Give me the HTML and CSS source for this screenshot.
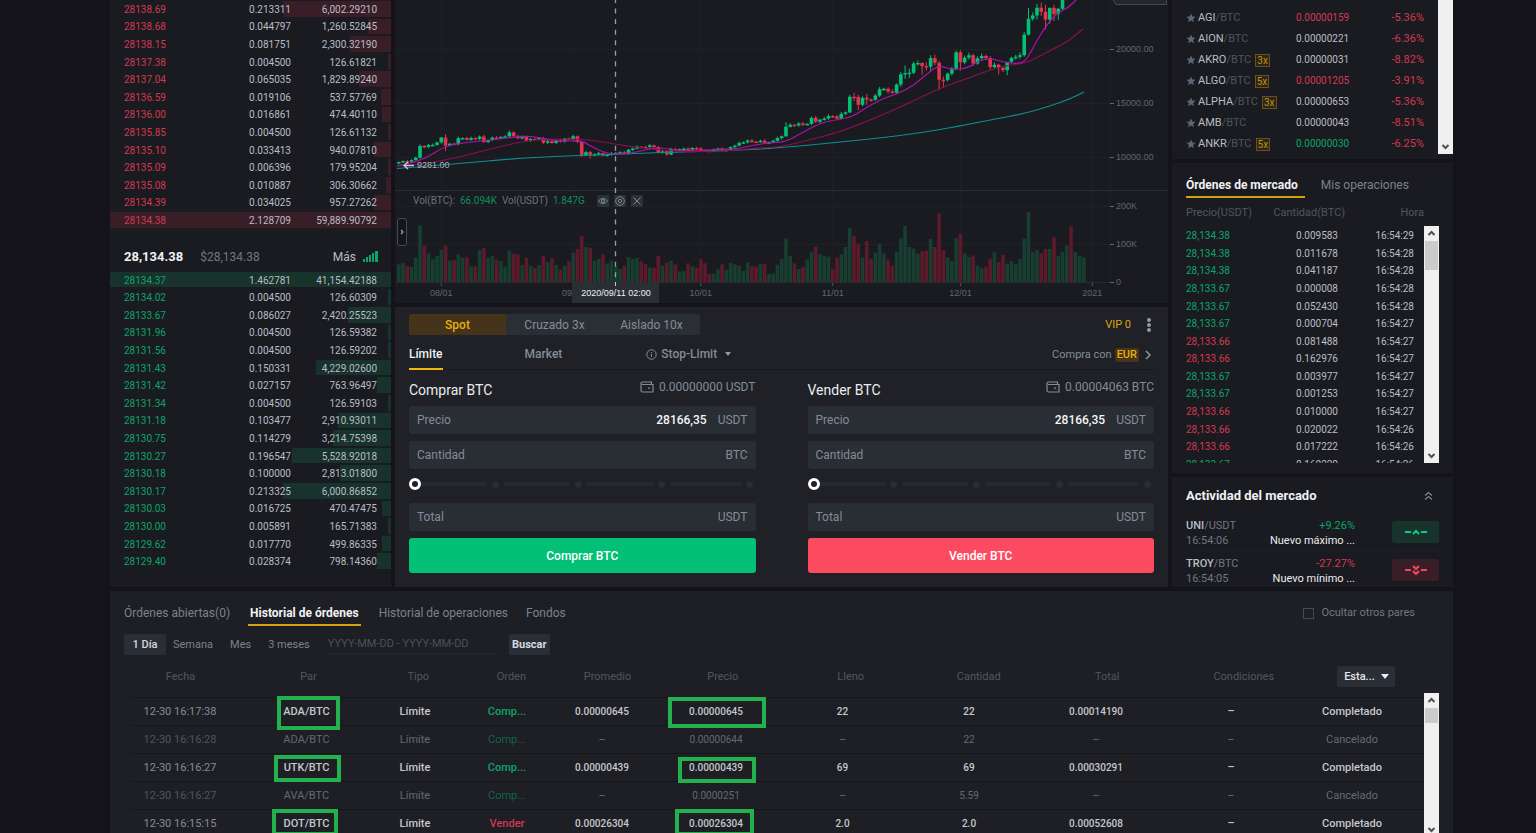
FILE: index.html
```html
<!DOCTYPE html>
<html lang="es">
<head>
<meta charset="utf-8">
<title>BTC/USDT</title>
<link rel="stylesheet" href="styles.css">
</head>
<body>
<svg class="defs" aria-hidden="true">
  <symbol id="star" viewBox="0 0 24 24"><path d="M12 1l3.200 7.400 7.800.7-6 5.200 1.900 7.900L12 18l-6.900 4.200L7 14.300 1 9.100l7.800-.7z"/></symbol>
  <symbol id="up" viewBox="0 0 15 15"><path d="M4.500 9l3-3 3 3" fill="none" stroke="#505050" stroke-width="2"/></symbol>
  <symbol id="down" viewBox="0 0 15 15"><path d="M4.500 6l3 3 3-3" fill="none" stroke="#505050" stroke-width="2"/></symbol>
  <symbol id="wallet" viewBox="0 0 14 12"><path d="M11.500 3V1H2.500A1.500 1.500 0 0 0 1 2.500v7A1.500 1.500 0 0 0 2.500 11H13V3.500H2M10 7.200H8" fill="none" stroke="currentColor" stroke-width="1.200"/></symbol>
</svg>
<div class="page">
  <main class="top">
    <section class="panel book">
      <table class="asks"><tbody id="asks"></tbody></table>
      <div class="last">
        <strong>28,134.38</strong><span class="usd">$28,134.38</span>
        <a href="#" class="more">Más
          <svg width="15" height="12" viewBox="0 0 15 12" fill="#0aa56a"><path d="M0 8h2v3H0zM3 6h2v5H3zM6 4h2v7H6zM9 2h2v9H9zM12 0h3v11h-3z"/></svg></a>
      </div>
      <table class="bids"><tbody id="bids"></tbody></table>
    </section>

    <div class="center">
      <section class="panel chart">
        <svg id="chart" viewBox="395 0 773 303" preserveAspectRatio="xMinYMin meet"></svg>
        <div class="legend">
          <span>Vol(BTC):</span><b>66.094K</b><span>Vol(USDT)</span><b>1.847G</b>
          <button aria-label="Ver"><svg viewBox="0 0 12 12"><path d="M1.500 6Q6 .8 10.500 6 6 11.200 1.500 6z"/><circle cx="6" cy="6" r="1.500"/></svg></button>
          <button aria-label="Ajustes"><svg viewBox="0 0 12 12"><circle cx="6" cy="6" r="4.300"/><circle cx="6" cy="6" r="1.700"/></svg></button>
          <button aria-label="Cerrar"><svg viewBox="0 0 12 12"><path d="M2.500 2.500l7 7m0-7l-7 7"/></svg></button>
        </div>
        <button class="drawer" aria-label="Herramientas"><svg width="6" height="8" viewBox="0 0 6 8"><path d="M2 2l2 2-2 2" fill="none" stroke="#9aa3af" stroke-width="1.200"/></svg></button>
      </section>

      <section class="panel trade">
        <div class="row modes">
          <div class="seg"><button class="on">Spot</button><button>Cruzado 3x</button><button>Aislado 10x</button></div>
          <div class="vip"><span>VIP 0</span>
            <svg width="4" height="14" viewBox="0 0 4 14" fill="#929aa5"><circle cx="2" cy="2" r="2"/><circle cx="2" cy="7" r="2"/><circle cx="2" cy="12" r="2"/></svg></div>
        </div>
        <div class="row types">
          <button class="on">Límite</button>
          <button class="market">Market</button>
          <button class="stop"><svg width="11" height="11" viewBox="0 0 11 11" fill="none" stroke="currentColor"><circle cx="5.500" cy="5.500" r="4.700"/><path d="M5.500 5v3M5.500 3v1.200"/></svg>Stop-Limit<i class="caret"></i></button>
          <a href="#" class="buywith">Compra con <em>EUR</em><svg width="6" height="10" viewBox="0 0 6 10"><path d="M1 1l4 4-4 4" fill="none" stroke="#929aa5" stroke-width="1.400"/></svg></a>
        </div>
        <div class="forms">
          <form class="order">
            <div class="ohead"><h2>Comprar BTC</h2><span><svg width="14" height="12"><use href="#wallet"/></svg>0.00000000 USDT</span></div>
            <label class="field"><span>Precio</span><input value="28166,35"><span>USDT</span></label>
            <label class="field"><span>Cantidad</span><input><span>BTC</span></label>
            <div class="slider"><div class="ticks"><i></i><i></i><i></i><i></i></div><input type="range" value="0" aria-label="Porcentaje de compra"></div>
            <label class="field"><span>Total</span><input><span>USDT</span></label>
            <button type="button" class="submit buy">Comprar BTC</button>
          </form>
          <form class="order">
            <div class="ohead"><h2>Vender BTC</h2><span><svg width="14" height="12"><use href="#wallet"/></svg>0.00004063 BTC</span></div>
            <label class="field"><span>Precio</span><input value="28166,35"><span>USDT</span></label>
            <label class="field"><span>Cantidad</span><input><span>BTC</span></label>
            <div class="slider"><div class="ticks"><i></i><i></i><i></i><i></i></div><input type="range" value="0" aria-label="Porcentaje de venta"></div>
            <label class="field"><span>Total</span><input><span>USDT</span></label>
            <button type="button" class="submit sell">Vender BTC</button>
          </form>
        </div>
      </section>
    </div>

    <aside class="side">
      <section class="panel pairs">
        <table><tbody>
          <tr><td><svg><use href="#star"/></svg><b>AGI</b>/BTC</td><td class="r">0.00000159</td><td class="r">-5.36%</td></tr>
          <tr><td><svg><use href="#star"/></svg><b>AION</b>/BTC</td><td>0.00000221</td><td class="r">-6.36%</td></tr>
          <tr><td><svg><use href="#star"/></svg><b>AKRO</b>/BTC<em>3x</em></td><td>0.00000031</td><td class="r">-8.82%</td></tr>
          <tr><td><svg><use href="#star"/></svg><b>ALGO</b>/BTC<em>5x</em></td><td class="r">0.00001205</td><td class="r">-3.91%</td></tr>
          <tr><td><svg><use href="#star"/></svg><b>ALPHA</b>/BTC<em>3x</em></td><td>0.00000653</td><td class="r">-5.36%</td></tr>
          <tr><td><svg><use href="#star"/></svg><b>AMB</b>/BTC</td><td>0.00000043</td><td class="r">-8.51%</td></tr>
          <tr><td><svg><use href="#star"/></svg><b>ANKR</b>/BTC<em>5x</em></td><td class="g">0.00000030</td><td class="r">-6.25%</td></tr>
        </tbody></table>
        <div class="scroll end"><svg><use href="#down"/></svg></div>
      </section>

      <section class="panel market-trades">
        <div class="tabs"><button class="on">Órdenes de mercado</button><button>Mis operaciones</button></div>
        <div class="thead"><span>Precio(USDT)</span><span>Cantidad(BTC)</span><span>Hora</span></div>
        <div class="view">
          <table><tbody id="trades"></tbody></table>
          <div class="scroll"><svg><use href="#up"/></svg><i class="thumb tall"></i><svg class="bottom"><use href="#down"/></svg></div>
        </div>
      </section>

      <section class="panel activity">
        <header><h2>Actividad del mercado</h2>
          <svg width="9" height="9" viewBox="0 0 9 9" fill="none" stroke="#7c8591" stroke-width="1.200"><path d="M1 4.500l3.500-3 3.500 3M1 8.500l3.500-3 3.500 3"/></svg></header>
        <div class="item">
          <div><span><b>UNI</b>/USDT</span><time>16:54:06</time></div>
          <div class="event"><span class="g">+9.26%</span><span>Nuevo máximo ...</span></div>
          <button class="badge gbg" aria-label="Subida"><svg width="24" height="10" viewBox="0 0 24 10" fill="none" stroke="#0ecb81" stroke-width="2"><path d="M1 5h6M17 5h6M9 7l3-3 3 3"/></svg></button>
        </div>
        <div class="item">
          <div><span><b>TROY</b>/BTC</span><time>16:54:05</time></div>
          <div class="event"><span class="r">-27.27%</span><span>Nuevo mínimo ...</span></div>
          <button class="badge rbg" aria-label="Bajada"><svg width="24" height="10" viewBox="0 0 24 10" fill="none" stroke="#f6465d" stroke-width="2"><path d="M1 5h6M17 5h6M9 1l3 3 3-3M9 6l3 3 3-3"/></svg></button>
        </div>
      </section>
    </aside>
  </main>

  <section class="panel history">
    <div class="htop">
      <div class="tabs"><button>Órdenes abiertas(0)</button><button class="on">Historial de órdenes</button><button>Historial de operaciones</button><button>Fondos</button></div>
      <label class="hide"><input type="checkbox">Ocultar otros pares</label>
    </div>
    <div class="filters">
      <button class="fill day">1 Día</button><button class="week">Semana</button><button class="month">Mes</button><button class="three">3 meses</button>
      <input placeholder="YYYY-MM-DD - YYYY-MM-DD" aria-label="Fechas">
      <button class="fill search">Buscar</button>
    </div>
    <div class="grid">
      <table>
        <thead><tr><th>Fecha</th><th>Par</th><th>Tipo</th><th>Orden</th><th>Promedio</th><th>Precio</th><th>Lleno</th><th>Cantidad</th><th>Total</th><th>Condiciones</th><th><select aria-label="Estado"><option>Esta...</option></select></th></tr></thead>
        <tbody>
          <tr><td>12-30 16:17:38</td><td>ADA/BTC<i class="mark pair-a"></i></td><td>Límite</td><td class="g">Comp...</td><td class="n">0.00000645</td><td class="n">0.00000645<i class="mark price-a"></i></td><td class="n">22</td><td class="n">22</td><td class="n">0.00014190</td><td>–</td><td>Completado</td></tr>
          <tr class="dim"><td>12-30 16:16:28</td><td>ADA/BTC</td><td>Límite</td><td class="g">Comp...</td><td>–</td><td class="n">0.00000644</td><td>–</td><td class="n">22</td><td>–</td><td>–</td><td>Cancelado</td></tr>
          <tr><td>12-30 16:16:27</td><td>UTK/BTC<i class="mark pair-b"></i></td><td>Límite</td><td class="g">Comp...</td><td class="n">0.00000439</td><td class="n">0.00000439<i class="mark price-b"></i></td><td class="n">69</td><td class="n">69</td><td class="n">0.00030291</td><td>–</td><td>Completado</td></tr>
          <tr class="dim"><td>12-30 16:16:27</td><td>AVA/BTC</td><td>Límite</td><td class="g">Comp...</td><td>–</td><td class="n">0.0000251</td><td>–</td><td class="n">5.59</td><td>–</td><td>–</td><td>Cancelado</td></tr>
          <tr><td>12-30 16:15:15</td><td>DOT/BTC<i class="mark pair-c"></i></td><td>Límite</td><td class="r">Vender</td><td class="n">0.00026304</td><td class="n">0.00026304<i class="mark price-c"></i></td><td class="n">2.0</td><td class="n">2.0</td><td class="n">0.00052608</td><td>–</td><td>Completado</td></tr>
        </tbody>
      </table>
      <div class="scroll"><svg><use href="#up"/></svg><i class="thumb"></i><svg class="bottom"><use href="#down"/></svg></div>
    </div>
  </section>
</div>
<script src="app.js"></script>
</body>
</html>
```
FILE: styles.css
```css
* { box-sizing: border-box; margin: 0; padding: 0; }
body {
  height: 100vh; overflow: hidden; background: #14131a; color: #b9bdc4;
  font-family: Roboto, "Liberation Sans", sans-serif; font-size: 11px; line-height: 14px;
}
button, input, select { font: inherit; color: inherit; background: none; border: 0; }
a { color: inherit; text-decoration: none; }
em, i { font-style: normal; }
table { border-collapse: collapse; }
.defs { position: absolute; width: 0; height: 0; }
.g, td.g { color: #0aa56a; }
.r, td.r { color: #d23951; }
.page { padding: 0 83px 0 110px; display: flex; flex-direction: column; gap: 4px; }
.top { display: grid; grid-template-columns: 281px 1fr 281px; gap: 4px; }
.panel { background: #1a1b20; position: relative; }

/* Order book */
.book { display: flex; flex-direction: column; padding-bottom: 17px; font-size: 10px; }
.book table { display: flex; flex-direction: column; min-height: 0; }
.asks { flex: 13 1 0; }
.bids { flex: 17 1 0; }
.book tbody { display: flex; flex-direction: column; flex: 1; }
.book tr {
  flex: 1 1 0; display: grid; grid-template-columns: 1fr 101px 86px; align-items: center;
  padding: 0 14px; position: relative;
}
.book td { position: relative; text-align: right; padding-top: 2px; }
.book td.price { text-align: left; }
.book .bar { position: absolute; right: 0; top: 1px; bottom: 1px; }
.asks .bar { background: #3a1e27; }
.bids .bar { background: #17332b; }
.last { height: 42px; padding: 21px 13px 0 14px; display: flex; gap: 17px; align-items: flex-start; font-size: 12px; }
.last strong { font-size: 13px; color: #f0f1f3; }
.last .usd { color: #6f7784; }
.more { margin-left: auto; display: flex; gap: 7px; align-items: center; }

/* Chart */
.center { display: flex; flex-direction: column; gap: 4px; min-width: 0; }
.chart { height: 303px; }
.chart > svg { display: block; width: 100%; height: 303px; }
.chart text { font-family: "Liberation Sans", Arial, sans-serif; font-size: 9px; fill: #5e6673; }
.legend {
  position: absolute; left: 18px; top: 194px; display: flex; align-items: center; gap: 5px;
  font-size: 10px; color: #6a727e;
}
.legend b { font-weight: 400; color: #0a8f5e; }
.legend b + button { margin-left: 7px; }
.legend button { width: 12px; height: 12px; background: #2b3139; }
.legend svg { display: block; width: 12px; height: 12px; fill: none; stroke: #7c8591; }
.drawer {
  position: absolute; left: 2px; top: 218px; width: 10px; height: 28px; display: grid; place-items: center;
  border: 1px solid #434a54; border-radius: 3px; background: #15161b;
}

/* Order entry */
.trade { background: #1f2126; padding: 7px 14px 14px; color: #848c98; font-size: 12px; }
.row { display: flex; align-items: center; }
.modes { justify-content: space-between; height: 21px; }
.seg { display: flex; background: #2a2f35; border-radius: 3px; overflow: hidden; }
.seg button { width: 97px; height: 21px; }
.seg .on { background: #46341a; color: #e6ae0c; font-weight: 500; }
.vip { display: flex; align-items: center; gap: 16px; padding-right: 3px; color: #dca60c; font-size: 11px; }
.types { height: 35px; border-bottom: 1px solid #191a1f; font-weight: 500; }
.types .on { color: #f0f1f3; border-bottom: 2px solid #f0b90b; height: 35px; padding-top: 6px; }
.types .market { margin-left: 82px; padding-top: 4px; }
.types .stop { margin-left: 84px; padding-top: 4px; display: flex; align-items: center; gap: 4px; }
.caret { border: 3px solid transparent; border-top: 4px solid #929aa5; border-bottom: 0; margin-left: 4px; }
.buywith { margin-left: auto; display: flex; align-items: center; gap: 3px; font-weight: 400; font-size: 11px; padding: 6px 3px 0 0; }
.buywith em { background: #46341a; color: #e6ae0c; border-radius: 2px; padding: 0 2px; font-weight: 500; }
.buywith svg { margin-left: 3px; }
.forms { display: grid; grid-template-columns: 1fr 1fr; gap: 52px; }
.order { display: flex; flex-direction: column; gap: 7px; }
.ohead { height: 29px; display: flex; justify-content: space-between; padding-top: 10px; }
.ohead h2 { font-size: 14px; line-height: 20px; font-weight: 400; color: #eaecef; }
.ohead span { display: flex; align-items: center; gap: 5px; height: 14px; }
.field { height: 28px; display: flex; align-items: center; gap: 11px; padding: 0 8px; background: #292d34; border-radius: 3px; }
.field input { flex: 1; min-width: 0; text-align: right; color: #f5f5f5; font-weight: 500; outline: 0; }
.slider { height: 20px; position: relative; }
.slider input { position: absolute; left: 0; top: 2px; width: 100%; height: 12px; appearance: none; }
.slider input::-webkit-slider-thumb { appearance: none; width: 12px; height: 12px; border-radius: 50%; border: 3px solid #fff; background: #1f2126; }
.ticks { position: absolute; left: 12px; right: 3px; top: 4px; display: flex; }
.ticks i { flex: 1; height: 8px; display: flex; align-items: center; gap: 5px; }
.ticks i::before { content: ""; flex: 1; height: 4px; background: #26292e; }
.ticks i::after { content: ""; width: 7px; height: 7px; border-radius: 50%; background: #292c31; margin-right: 5px; }
.ticks i:last-child::after { margin-right: 0; }
.submit { height: 35px; border-radius: 3px; color: #fff; font-weight: 500; }
.buy { background: #02c076; }
.sell { background: #fc4a61; }

/* Right column */
.side { display: flex; flex-direction: column; gap: 4px; }
.pairs { height: 159px; padding: 7px 0 0 14px; }
.pairs table, .pairs tbody { display: block; }
.pairs tr { display: grid; grid-template-columns: 110px 54px 1fr; padding: 1px 29px 0 0; height: 21px; align-items: center; color: #b9bdc4; }
.pairs td:first-child { display: flex; align-items: center; color: #4d545f; }
.pairs td b { color: #b9bdc4; font-weight: 400; }
.pairs td svg { width: 10px; height: 10px; fill: #5e6673; margin-right: 2px; }
.pairs td:nth-child(2) { font-size: 10px; }
.pairs td:last-child { text-align: right; }
.pairs em { margin-left: 4px; border: 1px solid #6b5118; color: #c3930f; background: #2b251a; line-height: 11px; padding: 0 1px; font-size: 10px; }
.scroll { position: absolute; top: 0; right: 0; bottom: 0; width: 15px; background: #f0f0f0; display: flex; flex-direction: column; align-items: center; }
.scroll svg { width: 15px; height: 15px; display: block; }
.scroll .bottom { margin-top: auto; }
.scroll .thumb { width: 13px; height: 15px; background: #cbcbcb; }
.scroll .tall { height: 29px; }
.pairs .scroll { bottom: 5px; justify-content: flex-end; }
.tabs { display: flex; gap: 18px; font-size: 12px; color: #7a828e; }
.tabs button { border-bottom: 2px solid transparent; }
.tabs .on { color: #f0f1f3; font-weight: 700; border-color: #d6a011; }
.market-trades { height: 310px; padding: 10px 14px 0; }
.market-trades .tabs { height: 25px; gap: 16px; }
.market-trades .on { padding-right: 7px; }
.thead { display: grid; grid-template-columns: 62px 97px 1fr; padding: 8px 15px 0 0; height: 28px; color: #4f5662; }
.thead span + span { text-align: right; }
.view { position: relative; height: 237px; overflow: hidden; font-size: 10px; padding-top: 1px; }
.view table { display: block; }
.view tbody { display: grid; grid-auto-rows: 1fr; height: 246px; }
.view tr { display: grid; grid-template-columns: 70px 82px 1fr; align-items: center; padding-right: 25px; }
.view td { padding-top: 1px; }
.view td + td { text-align: right; }
.activity { height: 110px; padding: 11px 14px 0; }
.activity header { display: flex; justify-content: space-between; align-items: center; padding-right: 6px; height: 15px; }
.activity h2 { font-size: 13px; color: #f0f1f3; }
.item { display: grid; grid-template-columns: 80px 89px 1fr; align-items: center; height: 37px; border-bottom: 1px solid #1e2025; color: #6f7784; }
.activity header + .item { margin-top: 11px; }
.activity .item:last-child { border-bottom: 0; }
.item div { display: flex; flex-direction: column; line-height: 15px; padding-top: 2px; }
.item b { font-weight: 500; color: #b9bdc4; }
.event { color: #eaecef; align-items: flex-end; white-space: nowrap; }
.badge { justify-self: end; width: 47px; height: 22px; border-radius: 3px; display: grid; place-items: center; }
.gbg { background: #17332b; }
.rbg { background: #3a1e27; }

/* Order history */
.history { background: #1e1f24; padding: 14px 14px 0; height: 260px; }
.htop { display: flex; justify-content: space-between; align-items: flex-start; }
.htop .tabs { height: 21px; }
.htop .tabs button { height: 21px; padding-bottom: 4px; }
.htop .tabs .on { padding-left: 2px; padding-right: 2px; }
.hide { display: flex; align-items: center; gap: 7px; color: #6f7784; padding-right: 24px; height: 16px; }
.hide input { appearance: none; width: 11px; height: 11px; border: 1px solid #454b56; }
.filters { display: flex; height: 22px; margin-top: 7px; color: #7a828e; align-items: center; }
.filters button { height: 21px; padding-top: 2px; }
.filters .fill { background: #2a2f37; color: #d7dadf; border-radius: 2px; font-weight: 500; }
.filters .day { width: 42px; margin-right: 7px; }
.filters .month { margin-left: 17px; }
.filters .three { margin-left: 17px; }
.filters input { width: 168px; height: 20px; margin: 0 13px 0 18px; border-bottom: 1px solid #26292e; padding-bottom: 1px; }
.filters input::placeholder { color: #4a515c; }
.filters .search { width: 41px; font-weight: 700; }
.grid { position: relative; padding-left: 7px; }
.grid table, .grid thead, .grid tbody { display: block; }
.grid tbody { padding-right: 15px; }
.grid tr { display: grid; grid-template-columns: 98fr 155fr 62fr 122fr 68fr 160fr 93fr 160fr 94fr 176fr 66fr 39fr; align-items: center; text-align: center; white-space: nowrap; }
.grid thead tr { height: 42px; color: #4f5662; }
.grid th { font-weight: 400; padding-top: 1px; }
.grid th:last-child { position: relative; justify-self: center; padding: 0; }
.grid select { appearance: none; background: #2a2f37; color: #e4e6e9; font-weight: 500; width: 58px; height: 21px; padding: 1px 7px 0; border-radius: 2px; }
.grid th:last-child::after { content: ""; position: absolute; right: 6px; top: 8px; border: 4px solid transparent; border-top: 5px solid #eaecef; border-bottom: 0; }
.grid tbody tr { height: 28px; border-top: 1px solid #15161a; color: #c5c8cd; font-weight: 500; }
.grid tbody td { position: relative; padding-top: 1px; }
.grid td:first-child { color: #858b95; font-weight: 400; }
.grid tbody .n { font-size: 10px; }
.grid .dim { color: #656970; font-weight: 400; }
.grid .dim td:first-child { color: #50555e; }
.grid .dim .g { color: #0d6646; }
.grid .scroll { top: 38px; bottom: 0; }
.mark { position: absolute; border: 4px solid #22b14c; }
.pair-a { left: calc(50% - 30px); top: -8px; width: 63px; height: 34px; }
.pair-b { left: calc(50% - 33px); top: -5px; width: 67px; height: 27px; }
.pair-c { left: calc(50% - 35px); top: -7px; width: 66px; height: 27px; }
.price-a { left: calc(50% - 48px); top: -7px; width: 98px; height: 31px; }
.price-b { left: calc(50% - 38px); top: -3px; width: 78px; height: 26px; }
.price-c { left: calc(50% - 41px); top: -7px; width: 79px; height: 27px; }
```
FILE: app.js
```js
const asks = [
  ['28138.69', '0.213311', '6,002.29210', 108], ['28138.68', '0.044797', '1,260.52845', 23],
  ['28138.15', '0.081751', '2,300.32190', 41], ['28137.38', '0.004500', '126.61821', 3],
  ['28137.04', '0.065035', '1,829.89240', 32], ['28136.59', '0.019106', '537.57769', 10],
  ['28136.00', '0.016861', '474.40110', 9], ['28135.85', '0.004500', '126.61132', 3],
  ['28135.10', '0.033413', '940.07810', 17], ['28135.09', '0.006396', '179.95204', 3],
  ['28135.08', '0.010887', '306.30662', 5], ['28134.39', '0.034025', '957.27262', 17],
  ['28134.38', '2.128709', '59,889.90792', 281]];
const bids = [
  ['28134.37', '1.462781', '41,154.42188', 281], ['28134.02', '0.004500', '126.60309', 3],
  ['28133.67', '0.086027', '2,420.25523', 43], ['28131.96', '0.004500', '126.59382', 3],
  ['28131.56', '0.004500', '126.59202', 3], ['28131.43', '0.150331', '4,229.02600', 75],
  ['28131.42', '0.027157', '763.96497', 14], ['28131.34', '0.004500', '126.59103', 3],
  ['28131.18', '0.103477', '2,910.93011', 53], ['28130.75', '0.114279', '3,214.75398', 58],
  ['28130.27', '0.196547', '5,528.92018', 99], ['28130.18', '0.100000', '2,813.01800', 51],
  ['28130.17', '0.213325', '6,000.86852', 108], ['28130.03', '0.016725', '470.47475', 9],
  ['28130.00', '0.005891', '165.71383', 3], ['28129.62', '0.017770', '499.86335', 9],
  ['28129.40', '0.028374', '798.14360', 14]];
const fillBook = (id, rows, cls) => {
  const body = document.getElementById(id);
  body.innerHTML = rows.map(([p, q, t]) =>
    `<tr><td class="price ${cls}">${p}</td><td>${q}</td><td>${t}</td></tr>`).join('');
  [...body.rows].forEach((tr, i) => {
    const bar = document.createElement('i');
    bar.className = 'bar';
    bar.style.width = rows[i][3] + 'px';
    tr.prepend(bar);
  });
};
fillBook('asks', asks, 'r');
fillBook('bids', bids, 'g');

const trades = [
  ['28,134.38', '0.009583', '29', 'g'], ['28,134.38', '0.011678', '28', 'g'], ['28,134.38', '0.041187', '28', 'g'],
  ['28,133.67', '0.000008', '28', 'g'], ['28,133.67', '0.052430', '28', 'g'], ['28,133.67', '0.000704', '27', 'g'],
  ['28,133.66', '0.081488', '27', 'r'], ['28,133.66', '0.162976', '27', 'r'], ['28,133.67', '0.003977', '27', 'g'],
  ['28,133.67', '0.001253', '27', 'g'], ['28,133.66', '0.010000', '27', 'r'], ['28,133.66', '0.020022', '26', 'r'],
  ['28,133.66', '0.017222', '26', 'r'], ['28,133.67', '0.160220', '26', 'g']];
document.getElementById('trades').innerHTML = trades.map(([p, q, s, c]) =>
  `<tr><td class="${c}">${p}</td><td>${q}</td><td>16:54:${s}</td></tr>`).join('');

/* Daily closes from 22 July */
const close = [9525, 9611, 9557, 9714, 9939, 11027, 10935, 11107, 11119, 11351,
  11803, 11063, 11234, 11188, 11744, 11756, 11593, 11755, 11674, 11893, 11380, 11572, 11791, 11768, 11860, 11911,
  12286, 11949, 11731, 11853, 11523, 11673, 11643, 11756, 11322, 11459, 11296, 11533, 11460, 11705, 11652,
  11924, 11389, 10140, 10447, 10162, 10251, 10355, 10120, 10217, 10335, 10383, 10440, 10327, 10669, 10779, 10943,
  10936, 10928, 11078, 10915, 10412, 10524, 10227, 10739, 10685, 10724, 10771, 10693, 10838, 10773,
  10613, 10570, 10545, 10665, 10788, 10596, 10665, 10919, 11050, 11292, 11366, 11522, 11421, 11417, 11505, 11320,
  11360, 11500, 11750, 11913, 12800, 12979, 12931, 13108, 13031, 13060, 13630, 13266, 13455, 13560, 13791,
  13755, 13550, 13997, 14130, 15579, 15565, 14833, 15479, 15320, 15297, 15684, 16276, 16317, 16070, 15955, 16713,
  17659, 17776, 17802, 18655, 18703, 18414, 18368, 19160, 18719, 17149, 17138, 17719, 18184, 19695,
  18764, 19204, 19421, 18650, 19147, 19359, 19166, 18324, 18541, 18254, 18036, 18808, 19174, 19273, 19426, 21335,
  22797, 23107, 23821, 23455, 22719, 23810, 23232, 23729, 24712, 26493, 26281, 27079, 27385, 28134];
/* Day index: [high, low] where the wick is long */
const wicks = {
  10: [11861, 11220], 11: [12123, 10550], 26: [12468, 11766], 43: [11462, 10000], 45: [10565, 9850], 91: [13217, 11886],
  106: [15750, 14070], 107: [15960, 15160], 108: [15753, 14344], 110: [15840, 14805], 118: [17858, 16500],
  119: [18476, 17240], 120: [18179, 17335], 123: [18773, 17610], 124: [18766, 18000], 125: [19418, 18018],
  126: [19484, 18500], 127: [18907, 16188], 128: [17457, 16438], 132: [19888, 18001], 131: [19863, 18130],
  141: [18640, 17650], 143: [18285, 17572], 147: [21560, 19278], 148: [23800, 21230], 150: [24171, 22750],
  151: [24295, 23060], 152: [24102, 21815], 153: [23837, 22353], 154: [24100, 22600], 155: [23794, 22700] };
const volTop = [793, 789, 797, 801, 773, 676, 737, 760, 778, 768, 750, 737, 782, 780, 763, 773, 772, 799, 799, 750,
  744, 773, 768, 779, 783, 799, 751, 761, 763, 795, 774, 797, 804, 795, 768, 786, 775, 795, 809, 797,
  784, 758, 747, 708, 741, 744, 782, 777, 763, 790, 782, 799, 807, 797, 771, 777, 773, 784, 793, 803,
  803, 767, 797, 788, 782, 793, 814, 813, 790, 799, 803, 778, 790, 822, 821, 808, 793, 810, 789, 793,
  797, 813, 787, 798, 800, 791, 792, 822, 821, 794, 777, 716, 767, 790, 807, 802, 778, 755, 740, 763,
  767, 770, 806, 773, 763, 741, 684, 708, 731, 772, 723, 777, 758, 731, 761, 779, 797, 755, 716, 678,
  741, 746, 761, 754, 752, 717, 741, 640, 750, 773, 783, 715, 702, 761, 771, 766, 797, 804, 800, 776,
  757, 786, 765, 791, 783, 793, 777, 717, 636, 756, 750, 760, 747, 747, 712, 768, 756, 736, 679, 756, 768, 772];
const X = i => 398.75 + 4.255 * i;
const Y = p => 157 - (p - 10000) * 0.0108;
const rect = (x, y, w, h, f) => `<rect x="${x}" y="${y}" width="${w}" height="${h}" fill="${f}"/>`;
const line = (x1, y1, x2, y2, s, extra = '') => `<line x1="${x1}" y1="${y1}" x2="${x2}" y2="${y2}" stroke="${s}" ${extra}/>`;
const text = (x, y, t, a = 'middle', extra = '') => `<text x="${x}" y="${y}" text-anchor="${a}" ${extra}>${t}</text>`;
const smooth = (pts, color) => {
  const p = pts.split(' ').map(s => s.split(',').map(Number));
  let d = `M${p[0]}`;
  for (let i = 1; i < p.length - 1; i++) {
    d += `Q${p[i]} ${(p[i][0] + p[i + 1][0]) / 2},${(p[i][1] + p[i + 1][1]) / 2}`;
  }
  return `<path d="${d}L${p[p.length - 1]}" fill="none" stroke="${color}" stroke-width="1.2"/>`;
};
let s = '';
[49, 103, 157, 206, 244].forEach(y => { s += line(395, y + .5, 1110, y + .5, '#1f2126'); });
[10, 41, 71, 102, 132, 163].forEach(i => { s += line(X(i), 0, X(i), 282, '#1f2126') + line(X(i), 282, X(i), 286, '#4d545f'); });
s += line(1110.5, 0, 1110.5, 282, '#1f2126') + line(395, 190.5, 1168, 190.5, '#2c2f34') + line(395, 282.5, 1110, 282.5, '#26292e');
close.forEach((c, i) => {
  const o = i ? close[i - 1] : 9390, up = c >= o, x = X(i), col = up ? '#02c076' : '#e0354f';
  const top = volTop[i] / 3;
  s += rect(x - 1.8, top, 3.6, 282 - top, up ? '#173e30' : '#5c1a2a');
  const [h, l] = wicks[i] || [Math.max(o, c) * (1.006 + (i % 3) * .003), Math.min(o, c) * (.994 - (i % 4) * .002)];
  s += line(x, Y(h), x, Y(l), col) + rect(x - 1.8, Y(Math.max(o, c)), 3.6, Math.max(1.4, Math.abs(Y(o) - Y(c))), col);
});
s += smooth('397,168.5 420,166.5 460,163.5 510,159 560,156 610,154.5 660,152.5 720,151 780,148 830,143 880,138 920,133 960,126 990,120 1025,113.5 1050,106 1070,99 1084,92', '#0c8f8f');
s += smooth('397,166 425,164 460,157 490,149 527,140.5 550,139 580,139 600,141.5 630,146.5 670,151 700,152 730,150.5 760,148 780,147 805,141 832,134 850,128 875,118 905,105 940,88 970,77.5 993,69 1010,65 1025,63.5 1040,56 1055,48 1067,42 1083,29', '#8c104d');
s += smooth('397,166 420,162 445,146 462,143 490,140 523,136 537,137 557,141.5 582,140.5 590,146 608,154 623,154 637,152 653,148 667,148 680,151 710,149.5 737,149 753,145 773,142.5 785,142 800,134 820,123 838,119.5 852,117 867,107 884,98 897,94 913,86 928,73 939,65 952,70 968,68 978,61 990,58 1003,62 1017,64 1026,61 1035,44 1045,27 1057,13 1068,8 1077,-1', '#ac12ac');
s += '<path d="M404 165.500h10M408 162l-4 3.500 4 3.500" stroke="#c5c8cd" fill="none" stroke-width="1.400"/>' + text(417, 168, '9281.00', 'start', 'style="fill:#aeb2b9"');
[['20000.00', 49], ['15000.00', 103], ['10000.00', 157], ['200K', 206], ['100K', 244], ['0', 282]].forEach(([t, y]) => {
  s += line(1110, y + .5, 1114, y + .5, '#5e6673') + text(1116, y + 3, t, 'start');
});
[['08/01', 10], ['10/01', 71], ['11/01', 102], ['12/01', 132], ['2021', 163]].forEach(([t, i]) => { s += text(X(i), 296, t); });
s += text(572, 296, '09', 'end');
s += line(615.5, -2, 615.5, 285, '#9a9da3', 'stroke-width="1.3" stroke-dasharray="5 5.55"');
s += rect(572, 282, 87, 21, '#2a2f34') + line(615.5, 282, 615.5, 286, '#c5c8cd') + text(616, 296, '2020/09/11 02:00', 'middle', 'style="fill:#f0f1f3"');
s += '<path d="M1112 -2l4 6.500h50.500V-2" fill="#24282d" stroke="#434a54"/>';
document.getElementById('chart').innerHTML = s;
```
